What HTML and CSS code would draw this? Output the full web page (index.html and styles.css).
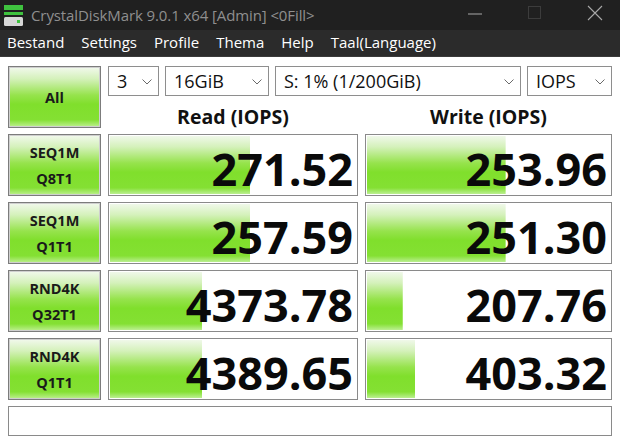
FILE: index.html
```html
<!DOCTYPE html>
<html>
<head>
<meta charset="utf-8">
<title>CrystalDiskMark</title>
<link rel="stylesheet" href="styles.css">
</head>
<body>
<div class="window">
  <div class="titlebar">
    <svg class="app-icon" width="20" height="22" viewBox="0 0 20 22">
      <rect x="0" y="0" width="19" height="5" fill="#3fc23f"/>
      <rect x="0" y="7" width="19" height="3" fill="#3fc23f"/>
      <rect x="0" y="12" width="19" height="9" rx="1.5" fill="#d6d6d6"/>
      <rect x="13" y="15" width="3" height="3" fill="#3fc23f"/>
    </svg>
    <span class="title">CrystalDiskMark 9.0.1 x64 [Admin] &lt;0Fill&gt;</span>
    <div class="winctl">
      <svg class="wc min" width="16" height="16" viewBox="0 0 16 16"><line x1="1" y1="8" x2="15" y2="8" stroke="#a8a8a8" stroke-width="1"/></svg>
      <svg class="wc max" width="16" height="16" viewBox="0 0 16 16"><rect x="1.5" y="1.5" width="12" height="12" fill="none" stroke="#3c3c3c" stroke-width="1"/></svg>
      <svg class="wc close" width="16" height="16" viewBox="0 0 16 16"><path d="M1 1 L15 15 M15 1 L1 15" stroke="#a8a8a8" stroke-width="1.1"/></svg>
    </div>
  </div>
  <div class="menubar">
    <span class="menu-item">Bestand</span>
    <span class="menu-item">Settings</span>
    <span class="menu-item">Profile</span>
    <span class="menu-item">Thema</span>
    <span class="menu-item">Help</span>
    <span class="menu-item">Taal(Language)</span>
  </div>
  <div class="main">
    <div class="grid">
      <div class="btn all">All</div>
      <div class="controls">
        <div class="combo c-count"><span>3</span><svg class="chev" width="10" height="6" viewBox="0 0 10 6"><polyline points="0.5,0.5 5,5 9.5,0.5" fill="none" stroke="#6a6a6a" stroke-width="1"/></svg></div>
        <div class="combo c-size"><span>16GiB</span><svg class="chev" width="10" height="6" viewBox="0 0 10 6"><polyline points="0.5,0.5 5,5 9.5,0.5" fill="none" stroke="#6a6a6a" stroke-width="1"/></svg></div>
        <div class="combo c-drive"><span>S: 1% (1/200GiB)</span><svg class="chev" width="10" height="6" viewBox="0 0 10 6"><polyline points="0.5,0.5 5,5 9.5,0.5" fill="none" stroke="#6a6a6a" stroke-width="1"/></svg></div>
        <div class="combo c-unit"><span>IOPS</span><svg class="chev" width="10" height="6" viewBox="0 0 10 6"><polyline points="0.5,0.5 5,5 9.5,0.5" fill="none" stroke="#6a6a6a" stroke-width="1"/></svg></div>
      </div>
      <div class="head">Read (IOPS)</div>
      <div class="head">Write (IOPS)</div>

      <div class="btn label"><span>SEQ1M</span><span>Q8T1</span></div>
      <div class="cell" style="--w:57%">271.52</div>
      <div class="cell" style="--w:57%">253.96</div>

      <div class="btn label"><span>SEQ1M</span><span>Q1T1</span></div>
      <div class="cell" style="--w:57%">257.59</div>
      <div class="cell" style="--w:57%">251.30</div>

      <div class="btn label"><span>RND4K</span><span>Q32T1</span></div>
      <div class="cell" style="--w:37.5%">4373.78</div>
      <div class="cell" style="--w:15%">207.76</div>

      <div class="btn label"><span>RND4K</span><span>Q1T1</span></div>
      <div class="cell" style="--w:37.5%">4389.65</div>
      <div class="cell" style="--w:20%">403.32</div>
    </div>
    <div class="status"></div>
  </div>
</div>
</body>
</html>
```
FILE: styles.css
```css
* { box-sizing: border-box; }
html, body { margin: 0; padding: 0; background: #ffffff; }
body {
  width: 620px;
  height: 442px;
  overflow: hidden;
  font-family: "Open Sans", "Noto Sans", sans-serif;
}
.window { width: 620px; height: 442px; display: flex; flex-direction: column; }

.titlebar {
  height: 30px;
  background: #202020;
  display: flex;
  align-items: center;
  padding-left: 4px;
}
.app-icon { flex: none; margin-right: 7px; margin-top: 2px; }
.title {
  color: #8f8f8f;
  font-size: 15px;
  white-space: nowrap;
  letter-spacing: -0.1px;
}
.winctl {
  margin-left: auto;
  display: flex;
  align-items: center;
  height: 30px;
}
.wc { display: block; }
.wc.min { margin-right: 44px; margin-top: -3px; }
.wc.max { margin-right: 44px; margin-top: -4px; }
.wc.close { margin-right: 17px; margin-top: -4px; }

.menubar {
  height: 27px;
  background: #2b2b2b;
  display: flex;
  align-items: center;
  padding-left: 0;
  border-bottom: 1px solid #3a3a3a;
}
.menu-item {
  color: #ffffff;
  font-size: 15px;
  padding: 0 9px 2px 7px;
  margin-right: 1px;
  white-space: nowrap;
}

.main {
  flex: 1;
  padding: 9px 8px 0 8px;
  display: flex;
  flex-direction: column;
  gap: 6px;
}
.grid {
  display: grid;
  grid-template-columns: 93px 250px 1fr;
  grid-template-rows: 30px 26px repeat(4, 62px);
  column-gap: 7px;
  row-gap: 6px;
}

.btn {
  border: 1px solid #7c7c7c;
  box-shadow: inset 0 0 0 1px #cfcfcf;
  background: linear-gradient(to bottom, #f2f9ee 0%, #d4f1ba 20%, #96e34c 47%, #80df2c 62%, #84e033 88%, #bff093 100%);
  display: flex;
  flex-direction: column;
  align-items: center;
  justify-content: center;
  font-weight: 700;
  color: #1a1a1a;
  font-size: 14.5px;
}
.all { grid-row: 1 / span 2; grid-column: 1; }
.label { line-height: 26px; padding-top: 1px; }

.controls {
  grid-column: 2 / span 2;
  display: flex;
  gap: 6px;
}
.combo {
  height: 30px;
  border: 1px solid #8e8e8e;
  background: #ffffff;
  display: flex;
  align-items: center;
  justify-content: space-between;
  padding: 0 6px 1px 8px;
  font-size: 18px;
  color: #111;
}
.chev { flex: none; margin-top: 2px; }
.c-count { width: 51px; }
.c-size { width: 104px; }
.c-drive { width: 246px; }
.c-unit { flex: 1; }

.head {
  font-weight: 700;
  font-size: 19.5px;
  text-align: center;
  color: #111;
  line-height: 26px;
  padding-top: 2px;
}

.cell {
  border: 1px solid #8a8a8a;
  box-shadow: inset 0 0 0 1px #ffffff;
  background-color: #ffffff;
  background-image: linear-gradient(to bottom, #f2f9ee 0%, #d4f1ba 20%, #96e34c 47%, #80df2c 62%, #84e033 88%, #c4f2a0 100%);
  background-repeat: no-repeat;
  background-size: var(--w) 100%;
  display: flex;
  align-items: center;
  justify-content: flex-end;
  padding: 6px 4px 0 0;
  font-weight: 700;
  font-size: 45px;
  line-height: 1;
  color: #0a0a0a;
  letter-spacing: 0;
}

.status {
  height: 30px;
  border: 1px solid #8a8a8a;
  box-shadow: inset 0 0 0 1px #ffffff;
  background: #ffffff;
}
```
